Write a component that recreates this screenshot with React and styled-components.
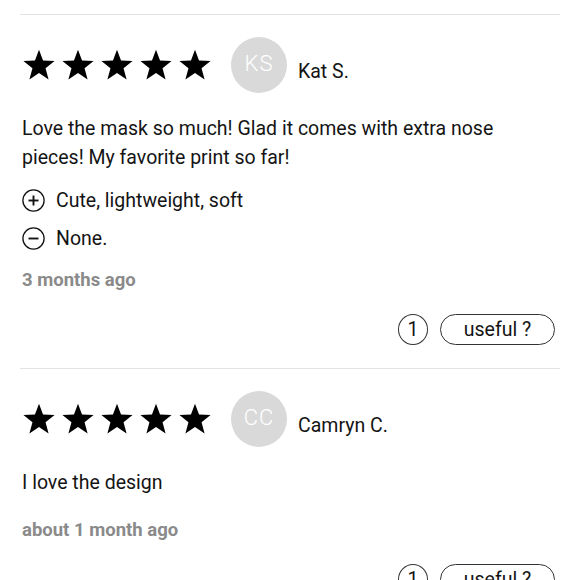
import React from 'react';
import styled, { createGlobalStyle } from 'styled-components';

const GlobalStyle = createGlobalStyle`
  body {
    margin: 0;
    background: #fff;
    font-family: Roboto, "Liberation Sans", sans-serif;
    color: #141414;
  }
`;

const Container = styled.div`
  padding: 14px 20px 0;
`;

const Review = styled.article`
  border-top: 1px solid #e2e2e2;
  padding: 21px 2px 23px;
  display: flex;
  flex-direction: column;
`;

const Header = styled.div`
  display: flex;
  align-items: center;
  height: 57px;
`;

const Stars = styled.div`
  display: flex;
  gap: 5px;
`;

const Avatar = styled.div`
  width: 56px;
  height: 56px;
  border-radius: 50%;
  background: #d9d9d9;
  color: #fff;
  font-size: 22px;
  font-weight: 300;
  letter-spacing: 1px;
  display: flex;
  align-items: center;
  justify-content: center;
  padding-bottom: 3px;
  box-sizing: border-box;
  margin-left: 19px;
`;

const Name = styled.div`
  font-size: 19.5px;
  margin-left: 11px;
  padding-top: 14px;
`;

const Body = styled.p`
  margin: 21px 0 0;
  font-size: 19.5px;
  line-height: 29px;
`;

const FeatureList = styled.div`
  display: flex;
  flex-direction: column;
  gap: 10px;
  margin-top: 14px;
`;

const Feature = styled.div`
  display: flex;
  align-items: center;
  gap: 11px;
  height: 28px;
  font-size: 19.5px;
`;

const Time = styled.div`
  margin-top: ${p => (p.$afterList ? 16 : 21)}px;
  font-size: 18.5px;
  line-height: 24px;
  font-weight: 700;
  color: #8a8a8a;
`;

const Actions = styled.div`
  display: flex;
  justify-content: flex-end;
  gap: 12px;
  margin-top: 22px;
  margin-right: 3px;
`;

const Count = styled.div`
  width: 30px;
  height: 31px;
  border: 1px solid #333;
  border-radius: 50%;
  box-sizing: border-box;
  display: flex;
  align-items: center;
  justify-content: center;
  font-size: 19.5px;
`;

const UsefulButton = styled.button`
  height: 31px;
  width: 115px;
  border: 1px solid #333;
  border-radius: 16px;
  background: #fff;
  font-family: inherit;
  font-size: 19.5px;
  color: #141414;
  padding: 0 0 1px;
  cursor: pointer;
`;

const Star = () => (
  <svg width="34" height="32" viewBox="0 0 24 23">
    <polygon
      fill="#000"
      points="12,0.5 14.9,8.2 23.2,8.6 16.7,13.8 18.9,21.9 12,17.3 5.1,21.9 7.3,13.8 0.8,8.6 9.1,8.2"
    />
  </svg>
);

const SignIcon = ({ minus }) => (
  <svg width="23" height="23" viewBox="0 0 23 23">
    <circle cx="11.5" cy="11.5" r="10.6" fill="none" stroke="#141414" strokeWidth="1.3" />
    <line x1="6.5" y1="11.5" x2="16.5" y2="11.5" stroke="#141414" strokeWidth="1.9" />
    {!minus && <line x1="11.5" y1="6.5" x2="11.5" y2="16.5" stroke="#141414" strokeWidth="1.9" />}
  </svg>
);

const reviews = [
  {
    initials: 'KS',
    name: 'Kat S.',
    text: 'Love the mask so much! Glad it comes with extra nose pieces! My favorite print so far!',
    pros: 'Cute, lightweight, soft',
    cons: 'None.',
    time: '3 months ago',
    useful: 1,
  },
  {
    initials: 'CC',
    name: 'Camryn C.',
    text: 'I love the design',
    time: 'about 1 month ago',
    useful: 1,
  },
];

const App = () => (
  <Container>
    <GlobalStyle />
    {reviews.map((r, i) => (
      <Review key={i}>
        <Header>
          <Stars>
            {[0, 1, 2, 3, 4].map(s => (
              <Star key={s} />
            ))}
          </Stars>
          <Avatar>{r.initials}</Avatar>
          <Name>{r.name}</Name>
        </Header>
        <Body>{r.text}</Body>
        {r.pros && (
          <FeatureList>
            <Feature>
              <SignIcon />
              {r.pros}
            </Feature>
            <Feature>
              <SignIcon minus />
              {r.cons}
            </Feature>
          </FeatureList>
        )}
        <Time $afterList={!!r.pros}>{r.time}</Time>
        <Actions>
          <Count>{r.useful}</Count>
          <UsefulButton>useful ?</UsefulButton>
        </Actions>
      </Review>
    ))}
  </Container>
);

export default App;
